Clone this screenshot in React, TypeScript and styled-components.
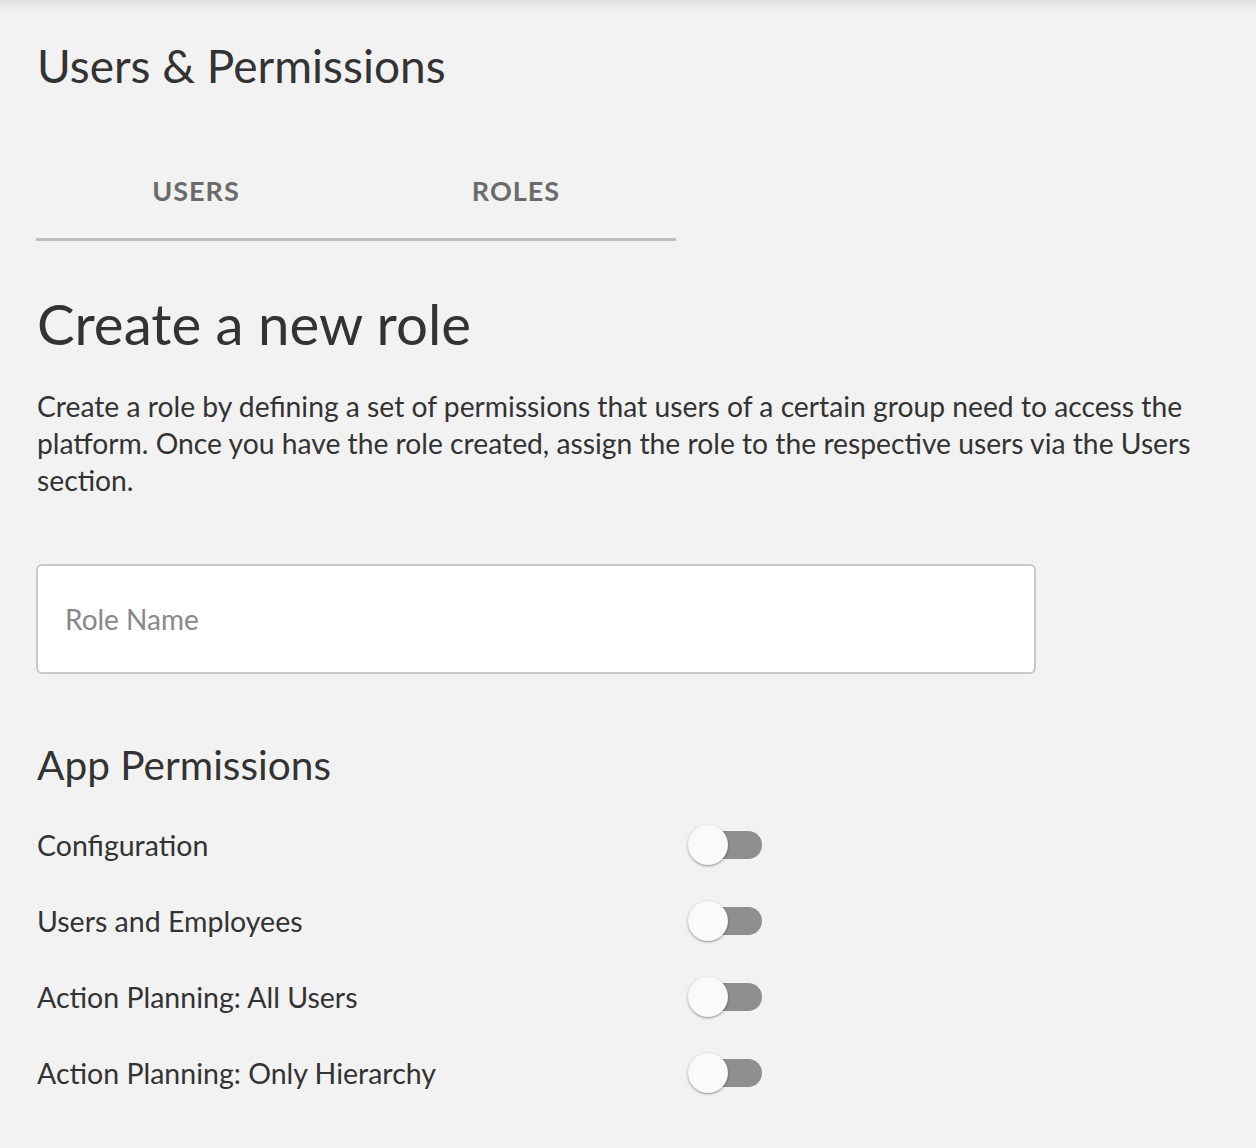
import { useState } from 'react';
import styled, { createGlobalStyle } from 'styled-components';

const GlobalStyle = createGlobalStyle`
  html, body {
    margin: 0;
    padding: 0;
    background: #f2f2f2;
  }
  body {
    font-family: Lato, "Noto Sans", sans-serif;
    color: #333333;
  }
`;

const permissions = [
  'Configuration',
  'Users and Employees',
  'Action Planning: All Users',
  'Action Planning: Only Hierarchy',
];

const App = () => {
  const [tab, setTab] = useState('roles');
  const [enabled, setEnabled] = useState<boolean[]>(permissions.map(() => false));

  const toggle = (index: number) =>
    setEnabled((prev) => prev.map((v, i) => (i === index ? !v : v)));

  return (
    <>
      <GlobalStyle />
      <TopShade />
      <Page>
        <Title>Users &amp; Permissions</Title>

        <TabBar>
          <Tab $active={tab === 'users'} onClick={() => setTab('users')}>
            Users
          </Tab>
          <Tab $active={tab === 'roles'} onClick={() => setTab('roles')}>
            Roles
          </Tab>
        </TabBar>

        <Heading>Create a new role</Heading>
        <Intro>
          Create a role by defining a set of permissions that users of a certain group need to
          access the platform. Once you have the role created, assign the role to the respective
          users via the Users section.
        </Intro>

        <RoleInput placeholder="Role Name" />

        <SubHeading>App Permissions</SubHeading>
        <PermissionList>
          {permissions.map((label, index) => (
            <PermissionRow key={label}>
              <PermissionLabel>{label}</PermissionLabel>
              <Switch
                type="button"
                role="switch"
                aria-checked={enabled[index]}
                onClick={() => toggle(index)}
              >
                <Track $on={enabled[index]} />
                <Thumb $on={enabled[index]} />
              </Switch>
            </PermissionRow>
          ))}
        </PermissionList>
      </Page>
    </>
  );
};

const TopShade = styled.div`
  height: 12px;
  background: linear-gradient(#e1e1e1, #f2f2f2);
`;

const Page = styled.main`
  padding: 0 36px 40px;
`;

const Title = styled.h1`
  margin: 26px 0 0 1px;
  font-size: 46px;
  line-height: 55px;
  font-weight: 400;
  color: #333333;
`;

const TabBar = styled.div`
  display: flex;
  width: 640px;
  margin-top: 67px;
  border-bottom: 3px solid #bdbdbd;
`;

const Tab = styled.button<{ $active: boolean }>`
  flex: 1;
  padding: 15px 0 31px;
  border: 0;
  background: transparent;
  font-family: inherit;
  font-size: 27px;
  line-height: 32px;
  font-weight: 700;
  letter-spacing: 1px;
  text-transform: uppercase;
  color: #6b6b6b;
  cursor: pointer;
`;

const Heading = styled.h2`
  margin: 47px 0 0 1px;
  font-size: 56.4px;
  line-height: 70px;
  font-weight: 400;
  color: #333333;
`;

const Intro = styled.p`
  margin: 30px 0 0 1px;
  font-size: 28.25px;
  line-height: 37px;
  color: #333333;
`;

const RoleInput = styled.input`
  display: block;
  box-sizing: border-box;
  width: 1000px;
  height: 110px;
  margin-top: 65px;
  padding: 0 27px;
  border: 2px solid #c8c8c8;
  border-radius: 6px;
  background: #ffffff;
  font-family: inherit;
  font-size: 28px;
  color: #333333;
  outline: none;

  &::placeholder {
    color: #888888;
  }
`;

const SubHeading = styled.h3`
  margin: 67px 0 0 1px;
  font-size: 40.6px;
  line-height: 48px;
  font-weight: 400;
  color: #333333;
`;

const PermissionList = styled.div`
  margin-top: 18px;
  width: 726px;
`;

const PermissionRow = styled.div`
  display: flex;
  align-items: center;
  justify-content: space-between;
  height: 76px;
`;

const PermissionLabel = styled.span`
  padding-left: 1px;
  font-size: 28.5px;
  color: #333333;
`;

const Switch = styled.button`
  position: relative;
  width: 74px;
  height: 40px;
  padding: 0;
  border: 0;
  background: transparent;
  cursor: pointer;
`;

const Track = styled.span<{ $on: boolean }>`
  position: absolute;
  top: 6px;
  right: 0;
  width: 56px;
  height: 28px;
  border-radius: 14px;
  background: ${(p) => (p.$on ? '#7fb0e0' : '#8f8f8f')};
`;

const Thumb = styled.span<{ $on: boolean }>`
  position: absolute;
  top: 0;
  left: ${(p) => (p.$on ? '34px' : '0')};
  width: 40px;
  height: 40px;
  border-radius: 50%;
  background: ${(p) => (p.$on ? '#1e73be' : '#fafafa')};
  box-shadow: 0 1px 3px rgba(0, 0, 0, 0.3), 0 1px 1px rgba(0, 0, 0, 0.14);
  transition: left 0.15s;
`;

export default App;
